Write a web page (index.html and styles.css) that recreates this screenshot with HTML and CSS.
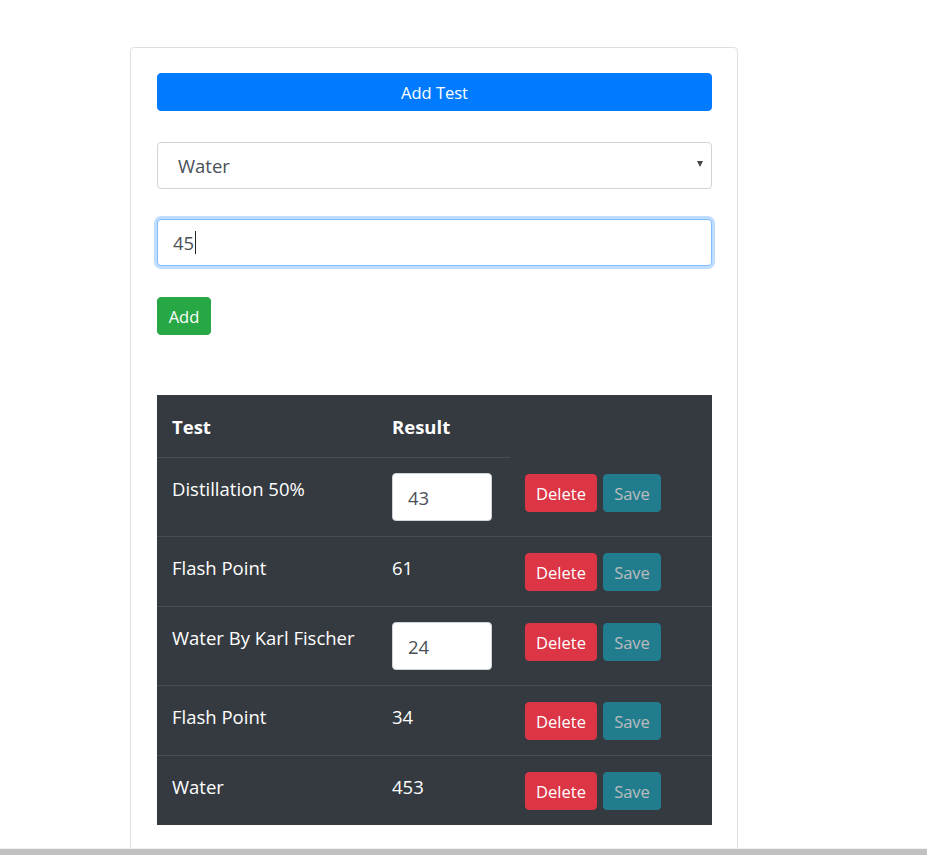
FILE: index.html
```html
<!DOCTYPE html>
<html lang="en">
<head>
<meta charset="utf-8">
<title>Tests</title>
<link rel="stylesheet" href="styles.css">
</head>
<body>
<div class="card">
  <button class="btn btn-primary btn-block" type="button">Add Test</button>
  <div class="select-wrap">
    <select class="form-control">
      <option>Water</option>
      <option>Flash Point</option>
      <option>Distillation 50%</option>
    </select>
  </div>
  <div class="input-wrap">
    <input class="form-control is-focused" type="text" value="45">
    <span class="caret"></span>
  </div>
  <div class="add-row">
    <button class="btn btn-success" type="button">Add</button>
  </div>
  <table class="table">
    <colgroup>
      <col class="c1"><col class="c2"><col class="c3">
    </colgroup>
    <thead>
      <tr><th>Test</th><th>Result</th></tr>
    </thead>
    <tbody>
      <tr>
        <td>Distillation 50%</td>
        <td><input class="cell-input" type="text" value="43"></td>
        <td><div class="actions"><button class="btn btn-danger" type="button">Delete</button><button class="btn btn-info" type="button" disabled>Save</button></div></td>
      </tr>
      <tr>
        <td>Flash Point</td>
        <td>61</td>
        <td><div class="actions"><button class="btn btn-danger" type="button">Delete</button><button class="btn btn-info" type="button" disabled>Save</button></div></td>
      </tr>
      <tr>
        <td>Water By Karl Fischer</td>
        <td><input class="cell-input" type="text" value="24"></td>
        <td><div class="actions"><button class="btn btn-danger" type="button">Delete</button><button class="btn btn-info" type="button" disabled>Save</button></div></td>
      </tr>
      <tr>
        <td>Flash Point</td>
        <td>34</td>
        <td><div class="actions"><button class="btn btn-danger" type="button">Delete</button><button class="btn btn-info" type="button" disabled>Save</button></div></td>
      </tr>
      <tr>
        <td>Water</td>
        <td>453</td>
        <td><div class="actions"><button class="btn btn-danger" type="button">Delete</button><button class="btn btn-info" type="button" disabled>Save</button></div></td>
      </tr>
    </tbody>
  </table>
</div>
<div class="hscroll"></div>
</body>
</html>
```

FILE: styles.css
```css
html, body {
  margin: 0;
  padding: 0;
  background: #fff;
  overflow: hidden;
}
body {
  font-family: "Open Sans", "Noto Sans", sans-serif;
  font-size: 16px;
  color: #212529;
  padding: 47px 0 0 130px;
}
.card {
  box-sizing: border-box;
  width: 608px;
  border: 1px solid #dfdfdf;
  border-radius: 4px;
  padding: 25px 25px 40px 26px;
}
.btn {
  display: inline-block;
  box-sizing: border-box;
  height: 38px;
  padding: 1px 11px 0;
  border: 1px solid transparent;
  border-radius: 4px;
  font-family: inherit;
  font-size: 16.5px;
  line-height: 36px;
  color: #fff;
  cursor: pointer;
}
.btn-block { display: block; width: 555px; }
.btn-primary { background: #007bff; border-color: #007bff; }
.btn-success { background: #28a745; border-color: #28a745; }
.btn-danger { background: #dc3545; border-color: #dc3545; }
.btn-info { background: #17a2b8; border-color: #17a2b8; }
.btn:disabled { opacity: .65; cursor: default; }

.select-wrap {
  position: relative;
  width: 555px;
  margin-top: 31px;
}
.select-wrap::after {
  content: "";
  position: absolute;
  right: 9px;
  top: 19px;
  border-left: 3.5px solid transparent;
  border-right: 3.5px solid transparent;
  border-top: 6px solid #444;
}
.form-control {
  display: block;
  box-sizing: border-box;
  width: 555px;
  height: 47px;
  padding: 0 20px;
  border: 1px solid #ced4da;
  border-radius: 4px;
  background: #fff;
  font-family: inherit;
  font-size: 18.5px;
  color: #495057;
  outline: none;
}
select.form-control {
  -webkit-appearance: none;
  appearance: none;
}
.input-wrap {
  position: relative;
  width: 555px;
  margin-top: 30px;
}
.input-wrap .form-control { padding-left: 15px; }
.is-focused {
  border-color: #80bdff;
  box-shadow: 0 0 0 3px rgba(0, 123, 255, .25);
}
.caret {
  position: absolute;
  left: 38px;
  top: 12px;
  width: 1px;
  height: 23px;
  background: #222;
}
.add-row { margin-top: 31px; }
.add-row .btn { width: 54px; padding: 1px 0 0; text-align: center; }

.table {
  margin-top: 60px;
  width: 555px;
  border-collapse: collapse;
  background: #343a40;
  color: #fff;
  table-layout: fixed;
}
.c1 { width: 220px; }
.c2 { width: 133px; }
.table th, .table td {
  padding: 15px;
  text-align: left;
  vertical-align: top;
  font-size: 18.5px;
  line-height: 32px;
}
.table th {
  font-weight: 700;
  padding: 16px 15px 14px;
  border-bottom: 1px solid #454d55;
}
.table td { border-top: 1px solid #454d55; }
.table tbody tr:first-child td { border-top: none; }
.cell-input {
  box-sizing: border-box;
  width: 100px;
  height: 48px;
  padding: 0 15px;
  border: 1px solid #ced4da;
  border-radius: 4px;
  font-family: inherit;
  font-size: 18.5px;
  color: #495057;
  background: #fff;
  outline: none;
  margin: 0;
  display: block;
}
.actions { display: flex; gap: 6px; padding-top: 1px; }
.actions .btn-danger { width: 72px; text-align: center; padding: 1px 0 0; }
.actions .btn-info { width: 58px; text-align: center; padding: 1px 0 0; }

.hscroll {
  position: fixed;
  left: 0;
  right: 0;
  bottom: 0;
  height: 6px;
  background: #c1c1c1;
  border-top: 1px solid #f0f0f0;
}
```
